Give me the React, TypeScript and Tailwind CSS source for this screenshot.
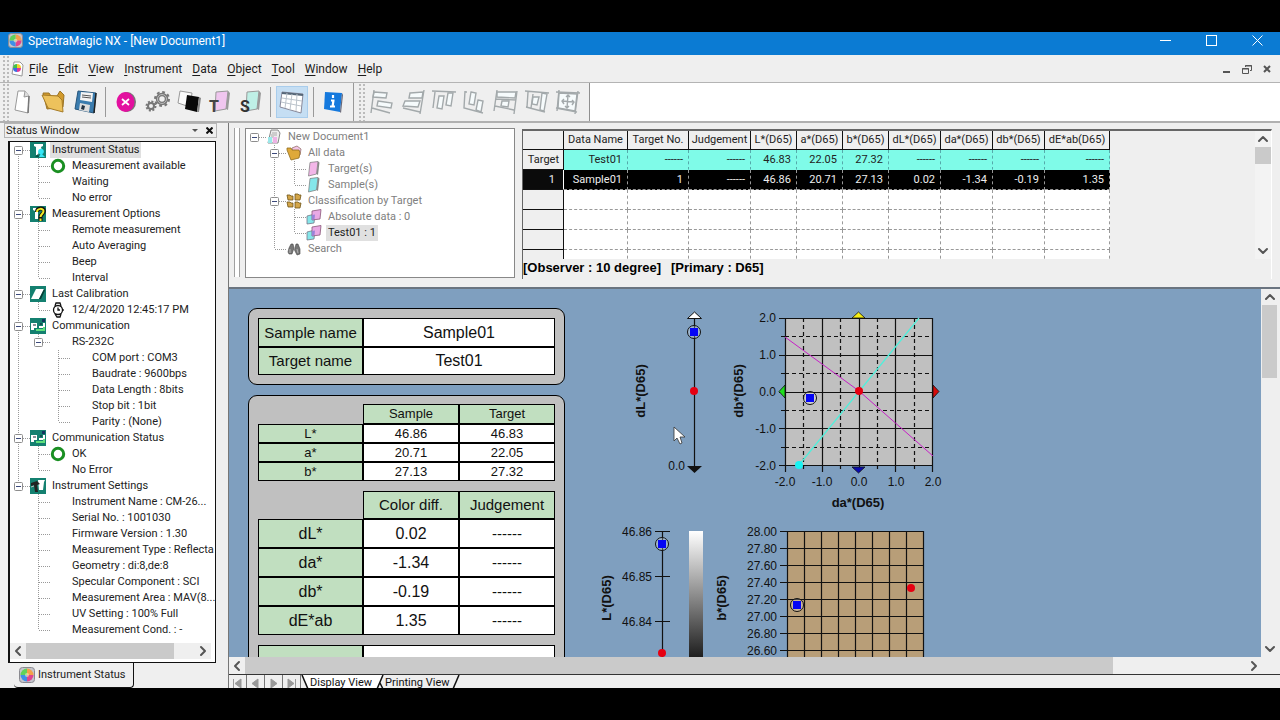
import type { ReactNode } from 'react'
import { ChevronDown, ChevronLeft, ChevronRight, ChevronUp } from 'lucide-react'

type TreeIcon =
  | 'status'
  | 'options'
  | 'calibration'
  | 'comm'
  | 'settings'
  | 'ring'
  | 'watch'
  | 'document'
  | 'folder'
  | 'target'
  | 'sample'
  | 'folders'
  | 'pair'
  | 'search'

interface TreeRow {
  guides: string
  label: string
  icon?: TreeIcon
  selected?: boolean
}

// One guide letter per 20px column:
// i = pass through, t = branch, l = last branch, . = empty
// F / M / L / R = toggle box that is first, middle, last or alone
const statusRows: TreeRow[] = [
  { guides: 'F', label: 'Instrument Status', icon: 'status', selected: true },
  { guides: 'it', label: 'Measurement available', icon: 'ring' },
  { guides: 'it', label: 'Waiting' },
  { guides: 'il', label: 'No error' },
  { guides: 'M', label: 'Measurement Options', icon: 'options' },
  { guides: 'it', label: 'Remote measurement' },
  { guides: 'it', label: 'Auto Averaging' },
  { guides: 'it', label: 'Beep' },
  { guides: 'il', label: 'Interval' },
  { guides: 'M', label: 'Last Calibration', icon: 'calibration' },
  { guides: 'il', label: '12/4/2020 12:45:17 PM', icon: 'watch' },
  { guides: 'M', label: 'Communication', icon: 'comm' },
  { guides: 'iL', label: 'RS-232C' },
  { guides: 'i.t', label: 'COM port : COM3' },
  { guides: 'i.t', label: 'Baudrate : 9600bps' },
  { guides: 'i.t', label: 'Data Length : 8bits' },
  { guides: 'i.t', label: 'Stop bit : 1bit' },
  { guides: 'i.l', label: 'Parity : (None)' },
  { guides: 'M', label: 'Communication Status', icon: 'comm' },
  { guides: 'it', label: 'OK', icon: 'ring' },
  { guides: 'il', label: 'No Error' },
  { guides: 'L', label: 'Instrument Settings', icon: 'settings' },
  { guides: '.t', label: 'Instrument Name : CM-26...' },
  { guides: '.t', label: 'Serial No. : 1001030' },
  { guides: '.t', label: 'Firmware Version : 1.30' },
  { guides: '.t', label: 'Measurement Type : Reflecta' },
  { guides: '.t', label: 'Geometry : di:8,de:8' },
  { guides: '.t', label: 'Specular Component : SCI' },
  { guides: '.t', label: 'Measurement Area : MAV(8...' },
  { guides: '.t', label: 'UV Setting : 100% Full' },
  { guides: '.l', label: 'Measurement Cond. : -' },
]

const documentRows: TreeRow[] = [
  { guides: 'R', label: 'New Document1', icon: 'document' },
  { guides: '.M', label: 'All data', icon: 'folder' },
  { guides: '.it', label: 'Target(s)', icon: 'target' },
  { guides: '.il', label: 'Sample(s)', icon: 'sample' },
  { guides: '.M', label: 'Classification by Target', icon: 'folders' },
  { guides: '.it', label: 'Absolute data : 0', icon: 'pair' },
  { guides: '.il', label: 'Test01 : 1', icon: 'pair', selected: true },
  { guides: '.l', label: 'Search', icon: 'search' },
]

const menus = ['File', 'Edit', 'View', 'Instrument', 'Data', 'Object', 'Tool', 'Window', 'Help']

const columns = [
  { label: 'Data Name', width: 'w-16' },
  { label: 'Target No.', width: 'w-[61px]' },
  { label: 'Judgement', width: 'w-[62px]' },
  { label: 'L*(D65)', width: 'w-[46px]' },
  { label: 'a*(D65)', width: 'w-[46px]' },
  { label: 'b*(D65)', width: 'w-[46px]' },
  { label: 'dL*(D65)', width: 'w-[52px]' },
  { label: 'da*(D65)', width: 'w-[52px]' },
  { label: 'db*(D65)', width: 'w-[52px]' },
  { label: 'dE*ab(D65)', width: 'w-[65px]' },
]

const none = '------'
const targetRow = ['Test01', none, none, '46.83', '22.05', '27.32', none, none, none, none]
const sampleRow = ['Sample01', '1', none, '46.86', '20.71', '27.13', '0.02', '-1.34', '-0.19', '1.35']

function Guide({ kind }: { kind: string }) {
  const box = 'FMLR'.includes(kind)
  const up = 'itlML'.includes(kind)
  const down = 'itFM'.includes(kind)
  const right = kind !== 'i' && kind !== '.'

  return (
    <svg width="20" height="16" className="shrink-0" stroke="#999" strokeDasharray="1 1" fill="none" aria-hidden="true">
      {up ? <path d="M8.5 0V8" /> : null}
      {down ? <path d="M8.5 8V16" /> : null}
      {right ? <path d="M9 8.5H20" /> : null}
      {box ? (
        <g strokeDasharray="none">
          <rect x="4.5" y="4.5" width="8" height="8" rx="1" fill="#fff" stroke="#8d8d8d" />
          <path d="M6 8.5H11" stroke="#3c4a7c" />
        </g>
      ) : null}
    </svg>
  )
}

function Sheet({ fill }: { fill: string }) {
  return (
    <g>
      <path d="M4 1.5L12 .5L10.500 13L2.500 15Z" fill={fill} stroke="#777" strokeWidth=".7" />
      <path d="M12 .5L13.500 1.500L12 14L10.500 13Z" fill="#888" />
    </g>
  )
}

function TreeGlyph({ icon }: { icon: TreeIcon }) {
  const teal = <rect width="16" height="16" fill="#148070" />

  return (
    <svg width="16" height="16" viewBox="0 0 16 16" className="shrink-0" aria-hidden="true">
      {icon === 'status' && (
        <>
          {teal}
          <path d="M4 2H13V4L11 5L12 9H9L8 13H6V5L4 4Z" fill="#fff" />
          <circle cx="11" cy="9.500" r="2.800" fill="#35e5f5" />
          <path d="M11 11L15 15H9Z" fill="#35e5f5" />
          <path d="M8 12L5 15H9Z" fill="#0a4f46" />
        </>
      )}
      {icon === 'options' && (
        <>
          {teal}
          <path d="M3 2H9L8 5V13H5V5L3 4Z" fill="#fff" />
          <path d="M7 6C7 1.500 14 1.500 14 5C14 8 10.500 8 10.500 11V15" stroke="#111" strokeWidth="4" fill="none" />
          <path d="M7 6C7 2 13.500 2 13.500 5C13.500 8 10.500 8 10.500 11M10.500 12.500V15" stroke="#f2ea25" strokeWidth="2" fill="none" />
        </>
      )}
      {icon === 'calibration' && (
        <>
          {teal}
          <path d="M6 3H14L9 13H1Z" fill="#fff" />
          <path d="M14 3L9 13H11L15 4.500Z" fill="#063d35" />
        </>
      )}
      {icon === 'comm' && (
        <>
          {teal}
          <path d="M1 5H7V10H4V12H1Z" fill="#fff" />
          <path d="M9 9H14V5" stroke="#fff" strokeWidth="2" fill="none" />
          <path d="M3 7H6M10 6H12" stroke="#123" />
          <path d="M6 12H14V9" stroke="#5fe07d" strokeWidth="2" fill="none" />
          <path d="M12 1H15V4H12Z" fill="#12355e" />
        </>
      )}
      {icon === 'settings' && (
        <>
          {teal}
          <path d="M8 2H15L14 4L13 12H9Z" fill="#fff" />
          <path d="M1 5L7 3L10 6L7 7L8 14H5L4 7L1 8Z" fill="#222" />
          <path d="M1 9L4 8" stroke="#bbb" />
        </>
      )}
      {icon === 'ring' && <circle cx="8" cy="8" r="5.700" fill="none" stroke="#1a8f22" strokeWidth="3" />}
      {icon === 'watch' && (
        <g fill="#fff" stroke="#111" strokeWidth="1.300">
          <path d="M5 4L6 1H10L11 4M5 12L7 15H10L11 12" />
          <circle cx="8" cy="8" r="4.500" />
          <path d="M8 5.500V8H10M13 7V9" />
        </g>
      )}
      {icon === 'document' && (
        <>
          <path d="M5 1H12L14 4L12 14H2Z" fill="#eee" stroke="#888" />
          <path d="M6 4H11M5 6H11M5 8H8" stroke="#aaa" />
          <path d="M2 8H6V14H2Z" fill="#9be8ea" />
          <path d="M7 8H11V14H7Z" fill="#eeb3e6" />
        </>
      )}
      {icon === 'folder' && (
        <>
          <path d="M6 3L11 1L15 4L14 10H7Z" fill="#f3c4e6" stroke="#a88" />
          <path d="M1 3H5L6 5H13L14 8L13 13L5 15L1 5Z" fill="#dfa93a" stroke="#8f6c20" strokeWidth=".8" />
        </>
      )}
      {icon === 'target' && <Sheet fill="#f3b6e8" />}
      {icon === 'sample' && <Sheet fill="#85e6ea" />}
      {icon === 'folders' && (
        <g fill="#d3a548" stroke="#6f5417" strokeWidth=".8">
          <path d="M1 2H4L5 3H7V7H2Z" />
          <path d="M9 1H12L13 2H15L14 7H9Z" />
          <path d="M1 9H4L5 10H7V14H2Z" />
          <path d="M9 9H12L13 10H15L14 15H9Z" />
        </g>
      )}
      {icon === 'pair' && (
        <>
          <path d="M1 7L9 5L8 14L1 15Z" fill="#85e6ea" stroke="#778" strokeWidth=".8" />
          <path d="M6 2L15 .5L14 10L6 11Z" fill="#e9a9e4" stroke="#857" strokeWidth=".8" />
          <path d="M6 6L9 5.500L8.500 10L6 11Z" fill="#9a82d8" />
        </>
      )}
      {icon === 'search' && (
        <g fill="#777" stroke="#444" strokeWidth=".6">
          <path d="M3 7L5 3H7L8 7L6 13H3L2 11Z" />
          <path d="M9 7L10 3H12L14 8V13L11 14L8.500 9Z" />
          <path d="M4 8L4 12M11 8L12 12" stroke="#ddd" />
        </g>
      )}
    </svg>
  )
}

function Tree({ rows, muted = false }: { rows: TreeRow[]; muted?: boolean }) {
  return (
    <ul className="overflow-hidden text-[11px] leading-4">
      {rows.map((row) => (
        <li key={row.guides + row.label} className="flex h-4 items-center whitespace-nowrap">
          {row.guides.split('').map((kind, index) => (
            <Guide key={index} kind={kind} />
          ))}
          <span className="flex w-5 shrink-0">{row.icon ? <TreeGlyph icon={row.icon} /> : null}</span>
          <span className={`pl-0.5 ${row.selected ? 'bg-[#e0e0e0] pr-0.5' : ''} ${muted && !row.selected ? 'text-[#808080]' : 'text-[#222]'}`}>
            {row.label}
          </span>
        </li>
      ))}
    </ul>
  )
}

function ColorOrb({ size = 16 }: { size?: number }) {
  return (
    <svg width={size} height={size} viewBox="0 0 16 16" aria-hidden="true">
      <rect x=".5" y=".5" width="15" height="15" rx="3" fill="#c4c4cc" stroke="#8a8a90" />
      <path d="M8 8V1.500A6.500 6.500 0 0 1 14.500 8Z" fill="#f3a04a" />
      <path d="M8 8H14.500A6.500 6.500 0 0 1 8 14.500Z" fill="#e0458e" />
      <path d="M8 8V14.500A6.500 6.500 0 0 1 1.500 8Z" fill="#3e8fe8" />
      <path d="M8 8H1.500A6.500 6.500 0 0 1 8 1.500Z" fill="#5fd35a" />
      <circle cx="8" cy="8" r="2" fill="#f4f0c0" opacity=".6" />
    </svg>
  )
}

function Grip() {
  return <span className="h-full w-2 shrink-0 bg-[radial-gradient(#bbb_1px,transparent_1px)] bg-[size:4px_4px]" />
}

function TitleBar() {
  return (
    <header className="flex h-[23px] shrink-0 items-center bg-[#0b7bd3] pb-1.5 pl-2 text-white">
      <ColorOrb size={15} />
      <h1 className="ml-[5px] text-xs leading-4">SpectraMagic NX - [New Document1]</h1>
      <div className="ml-auto flex">
        <button type="button" aria-label="Minimize" className="flex h-4 w-[46px] items-center justify-center">
          <svg width="11" height="11" stroke="#fff"><path d="M0 5.500H11" /></svg>
        </button>
        <button type="button" aria-label="Maximize" className="flex h-4 w-[46px] items-center justify-center">
          <svg width="11" height="11" stroke="#fff" fill="none"><rect x=".5" y=".5" width="10" height="10" /></svg>
        </button>
        <button type="button" aria-label="Close" className="flex h-4 w-[46px] items-center justify-center">
          <svg width="11" height="11" stroke="#fff"><path d="M.5 .5L10.500 10.500M10.500 .5L.5 10.500" /></svg>
        </button>
      </div>
    </header>
  )
}

function MenuBar() {
  return (
    <nav className="flex h-7 shrink-0 items-center border-b border-[#b4b4b4] bg-[#efefef] pl-0.5 text-xs text-[#1c1c1c]">
      <Grip />
      <svg width="13" height="16" viewBox="0 0 13 16" className="mr-[5px] ml-px" aria-hidden="true">
        <path d="M3 1H9L12 4L11 15L1 13Z" fill="#fff" stroke="#999" />
        <path d="M6 7V3A4 4 0 0 1 10 7Z" fill="#f5d02c" />
        <path d="M6 7H10A4 4 0 0 1 6 11Z" fill="#e0379a" />
        <path d="M6 7V11A4 4 0 0 1 2 7Z" fill="#3d6fe0" />
        <path d="M6 7H2A4 4 0 0 1 6 3Z" fill="#45c04a" />
      </svg>
      <ul className="flex gap-2.5">
        {menus.map((menu) => (
          <li key={menu}>
            <button type="button">
              <span className="underline underline-offset-2">{menu[0]}</span>
              {menu.slice(1)}
            </button>
          </li>
        ))}
      </ul>
      <div className="mr-[3px] ml-auto flex">
        <button type="button" aria-label="Minimize document" className="flex w-5 justify-center">
          <svg width="10" height="10" stroke="#555" strokeWidth="2"><path d="M1 8H8" /></svg>
        </button>
        <button type="button" aria-label="Restore document" className="flex w-5 justify-center">
          <svg width="10" height="10" stroke="#555" fill="none">
            <path d="M3.500 3V1.500H9.500V6.500H8M3 2H10" />
            <path d="M.5 4.500H6.500V9.500H.5ZM0 5H7" />
          </svg>
        </button>
        <button type="button" aria-label="Close document" className="flex w-5 justify-center">
          <svg width="8" height="10" stroke="#555" strokeWidth="2"><path d="M1 2L7 8M7 2L1 8" /></svg>
        </button>
      </div>
    </nav>
  )
}

function ToolButton({ label, width = 'w-8', active = false, children }: { label: string; width?: string; active?: boolean; children: ReactNode }) {
  return (
    <button
      type="button"
      aria-label={label}
      className={`flex h-8 shrink-0 items-center justify-center ${width} ${active ? 'border border-[#a9cdec] bg-[#c5def3]' : ''}`}
    >
      <svg width="26" height="26" viewBox="0 0 26 26" fill="none" className="shrink-0 overflow-visible">
        {children}
      </svg>
    </button>
  )
}

function ToolSeparator() {
  return <span className="mx-[5px] h-[30px] w-px shrink-0 bg-[#999]" />
}

const alignTools = [
  { label: 'Align left', frame: 'M5 1L2 24M3 19L21 24', boxes: 'M5 3L18 4L17 9L4 8ZM9 12L23 14L22 19L8 17Z' },
  { label: 'Align right', frame: 'M24 1L20 25M3 19L20 23', boxes: 'M10 4L23 3L22 9L9 9ZM5 12L20 12L18 18L3 17Z' },
  { label: 'Align top', frame: 'M1 2L25 3M4 3L2 19', boxes: 'M8 7L13 7L11 20L6 19ZM17 4H22L20 17L15 16Z' },
  { label: 'Align bottom', frame: 'M3 2L2 19L21 24M3 3H5', boxes: 'M9 3L14 4L12 16L7 15ZM16 11L21 12L19 23L14 21Z' },
  { label: 'Same width', frame: 'M4 1L1 22M24 2L21 25M3 10L23 11M2 17L21 21', boxes: 'M4 3L23 3L22 9L4 8ZM9 12L16 12L15 18L8 17Z' },
  { label: 'Same height', frame: 'M1 2L25 4M4 3L3 18M2 18L21 23M9 5L7 19', boxes: 'M18 4L23 5L20 22L16 21ZM9 8H15L13 16L8 15Z' },
  { label: 'Same size', frame: 'M1 3L25 4M4 1L2 22M23 2L20 25M1 19L22 23', boxes: 'M4 4L22 5L20 22L3 19Z' },
]

function Toolbar() {
  return (
    <div className="flex h-10 shrink-0 border-b-2 border-[#b0b0b0] bg-white">
      <div className="flex items-center border-r border-[#8f8f8f] bg-[#efefef] pr-1.5 pl-0.5">
        <Grip />
        <ToolButton label="New" width="w-[26px]">
          <path d="M8 2H15L19 7L18 24L5 21Z" fill="#fff" stroke="#999" />
          <path d="M15 2L14 8L19 7" fill="#ddd" stroke="#999" />
          <path d="M19 7L18 24" stroke="#777" strokeWidth="1.500" />
        </ToolButton>
        <ToolButton label="Open" width="w-9">
          <path d="M2 4H8L10 7H16L19 2L23 6L22 18L6 20Z" fill="#d29a2c" stroke="#9a7426" />
          <path d="M1 6L17 7L21 11L22 23L7 19Z" fill="#edc25c" stroke="#a67c28" />
        </ToolButton>
        <ToolButton label="Save" width="w-7">
          <path d="M5 2L23 4L21 24L2 20Z" fill="#3b7cae" stroke="#27567c" />
          <path d="M8 3L20 4L19 13L7 11Z" fill="#f4f4f4" />
          <path d="M9 6L18 7M9 8L18 9" stroke="#555" />
          <path d="M7 14L17 16L16 23L6 21Z" fill="#ddd" />
          <path d="M9 16L12 17L11 21L8 20Z" fill="#234" />
          <path d="M23 4L21 24" stroke="#222" strokeWidth="1.500" />
        </ToolButton>
        <ToolSeparator />
        <ToolButton label="Disconnect" width="w-[30px]">
          <ellipse cx="14" cy="13" rx="9" ry="10" fill="#777" />
          <ellipse cx="12.500" cy="13" rx="9" ry="10" fill="#e3109f" />
          <path d="M9 10L16 16M16 10L9 16" stroke="#fff" strokeWidth="1.800" />
        </ToolButton>
        <ToolButton label="Settings">
          <circle cx="18" cy="10" r="4.500" stroke="#777" strokeWidth="3.500" />
          <circle cx="18" cy="10" r="7" stroke="#777" strokeWidth="2" strokeDasharray="2.800 2.700" />
          <circle cx="18" cy="10" r="4.500" stroke="#bbb" />
          <circle cx="7" cy="17" r="3" stroke="#777" strokeWidth="2" />
          <circle cx="7" cy="17" r="4.500" stroke="#777" strokeWidth="2" strokeDasharray="2 1.500" />
        </ToolButton>
        <ToolButton label="Calibrate">
          <path d="M4 2L16 4L14 18L2 14Z" fill="#fafafa" stroke="#999" />
          <path d="M11 6L23 8L21 23L9 20Z" fill="#090909" />
          <path d="M23 8L25 9L23 23L21 23Z" fill="#888" />
        </ToolButton>
        <ToolButton label="Measure target" width="w-[30px]">
          <path d="M9 3L21 2L19 20L8 22Z" fill="#f0c6ef" stroke="#999" />
          <path d="M21 2L23 4L21 21L19 20Z" fill="#999" />
          <text x="2" y="23" fill="#444" className="text-base font-bold">T</text>
        </ToolButton>
        <ToolButton label="Measure sample" width="w-[30px]">
          <path d="M10 3L22 2L20 20L9 22Z" fill="#bff0e6" stroke="#999" />
          <path d="M22 2L24 4L22 21L20 20Z" fill="#999" />
          <text x="3" y="23" fill="#333" className="text-base font-bold">S</text>
        </ToolButton>
        <ToolSeparator />
        <ToolButton label="List window" active>
          <path d="M3 3L24 5L22 24L1 18Z" fill="#fff" stroke="#889" />
          <path d="M3 4L24 6" stroke="#567" strokeWidth="2" />
          <path d="M3 9L23 12M2 13L22 17M8 4L6 19M13 5L11 21M18 5L17 22" stroke="#bcc4cc" />
        </ToolButton>
        <ToolSeparator />
        <ToolButton label="Information" width="w-[27px]">
          <path d="M5 3L22 4L20 23L4 20Z" fill="#1579dd" />
          <path d="M22 4L23 6L21 24L20 23Z" fill="#667" />
          <path d="M13 6V9M11 11.500H14.500M13.500 11L12.500 18M10 17.500H15" stroke="#fff" strokeWidth="2.200" />
        </ToolButton>
        <span className="mr-1 ml-[7px] h-full w-px bg-[#999]" />
        <Grip />
        {alignTools.map((tool) => (
          <ToolButton key={tool.label} label={tool.label} width="w-[31px]">
            <g stroke="#a3a9ab" strokeWidth="1.400">
              <path d={tool.boxes} fill="#f6fbfc" />
              <path d={tool.frame} />
              {tool.label === 'Same size' ? (
                <path d="M13 6L12 19M7 12L19 13M11 8L13 6L15 8M10 17L12 19L14 17M9 10L7 12L9 15M17 11L19 13L17 16" />
              ) : null}
            </g>
          </ToolButton>
        ))}
      </div>
    </div>
  )
}

function StatusPane() {
  return (
    <aside className="flex w-[217px] shrink-0 flex-col bg-[#efefef]">
      <div className="ml-1 flex h-[15px] shrink-0 items-center border border-[#b5b5b5] pl-px">
        <h2 className="text-[11px] leading-3 text-[#222]">Status Window</h2>
        <button type="button" aria-label="Pane menu" className="mr-2 ml-auto">
          <svg width="6" height="4"><path d="M0 0H6L3 3Z" fill="#555" /></svg>
        </button>
        <button type="button" aria-label="Close pane" className="mr-[3px]">
          <svg width="7" height="7" stroke="#111" strokeWidth="2"><path d="M.5 .5L6.500 6.500M6.500 .5L.5 6.500" /></svg>
        </button>
      </div>
      <div className="mt-[3px] mr-px ml-2 flex min-h-0 flex-1 flex-col border border-l-2 border-[#111] bg-white pb-[3px]">
        <div className="min-h-0 flex-1 overflow-hidden">
          <Tree rows={statusRows} />
        </div>
        <div className="mr-1 flex h-4 shrink-0 items-center bg-[#efefef] text-[#555]">
          <button type="button" aria-label="Scroll left"><ChevronLeft className="size-4" strokeWidth={3} /></button>
          <span className="h-full w-[148px] bg-[#cacaca]" />
          <button type="button" aria-label="Scroll right" className="ml-auto"><ChevronRight className="size-4" strokeWidth={3} /></button>
        </div>
      </div>
      <div className="flex h-[25px] shrink-0">
        <button type="button" className="ml-3.5 flex items-center gap-[3px] rounded-b-sm border-r border-b border-[#111] pr-2 pl-[5px] text-[11px] text-[#222]">
          <ColorOrb />
          Instrument Status
        </button>
      </div>
    </aside>
  )
}

function DataGrid() {
  return (
    <div className="mt-px flex min-w-0 flex-1 flex-col border-t-2 border-r border-l border-[#666] border-r-white">
      <div className="flex h-32 shrink-0">
        <div className="min-w-0 overflow-hidden">
          <table className="table-fixed border-separate border-spacing-0 text-right text-[11px] leading-[18px] whitespace-nowrap text-[#222]">
            <thead>
              <tr className="h-[19px] text-center">
                <td className="w-[41px] border-r border-b border-[#111] bg-[#efefef]" />
                {columns.map((column) => (
                  <th key={column.label} scope="col" className={`border-r border-b border-[#111] bg-[#efefef] p-0 font-normal ${column.width}`}>
                    {column.label}
                  </th>
                ))}
              </tr>
            </thead>
            <tbody>
              <tr className="h-5">
                <th scope="row" className="border-r border-b border-[#111] bg-[#efefef] p-0 px-1 text-right font-normal">Target</th>
                {targetRow.map((value, index) => (
                  <td key={index} className="border-r border-b border-dashed border-[#5aa] border-b-[#7ffbe8] bg-[#7ffbe8] p-0 pr-[5px]">{value}</td>
                ))}
              </tr>
              <tr className="h-5 text-[#eee]">
                <th scope="row" className="border-r border-b border-[#111] border-r-white bg-[#0b0b0b] p-0 pr-2 text-right font-normal">1</th>
                {sampleRow.map((value, index) => (
                  <td key={index} className="border-r border-b border-dashed border-[#999] bg-black p-0 pr-[5px]">{value}</td>
                ))}
              </tr>
              {[0, 1, 2, 3].map((row) => (
                <tr key={row} className="h-5">
                  <th className="border-r border-b border-[#111] bg-[#efefef]" />
                  {columns.map((column) => (
                    <td key={column.label} className="border-r border-b border-dashed border-[#999] bg-white" />
                  ))}
                </tr>
              ))}
            </tbody>
          </table>
        </div>
        <div className="ml-auto flex w-4 shrink-0 flex-col items-center bg-[#f3f3f3] text-[#555]">
          <button type="button" aria-label="Scroll up"><ChevronUp className="size-4" strokeWidth={3} /></button>
          <span className="h-[17px] w-full bg-[#cacaca]" />
          <button type="button" aria-label="Scroll down" className="mt-auto"><ChevronDown className="size-4" strokeWidth={3} /></button>
        </div>
      </div>
      <p className="flex gap-2.5 font-['Liberation_Sans',Arial,sans-serif] text-[13px] leading-[18px] font-bold text-black">
        <span>[Observer : 10 degree]</span>
        <span>[Primary : D65]</span>
      </p>
    </div>
  )
}

const cell = 'border border-black p-0 text-center font-normal'
const head = 'border border-black bg-[#c1dfc0] p-0 text-center font-normal'

function NameCard() {
  return (
    <section className="rounded-[9px] border border-black bg-[#c0c0c0] p-[9px]">
      <table className="w-full table-fixed border-separate border-spacing-0 text-base leading-6">
        <tbody>
          <tr className="h-[29px]">
            <th scope="row" className={`${head} w-[105px] text-[15px]`}>Sample name</th>
            <td className={`${cell} bg-white`}>Sample01</td>
          </tr>
          <tr className="h-7">
            <th scope="row" className={`${head} text-[15px]`}>Target name</th>
            <td className={`${cell} bg-white`}>Test01</td>
          </tr>
        </tbody>
      </table>
    </section>
  )
}

function ResultCard() {
  const values = [
    ['L*', '46.86', '46.83'],
    ['a*', '20.71', '22.05'],
    ['b*', '27.13', '27.32'],
  ]
  const diffs = [
    ['dL*', '0.02'],
    ['da*', '-1.34'],
    ['db*', '-0.19'],
    ['dE*ab', '1.35'],
  ]

  return (
    <section className="flex flex-col gap-2.5 rounded-[9px] border border-black bg-[#c0c0c0] px-[9px] py-2">
      <table className="w-full table-fixed border-separate border-spacing-0 text-[13px] leading-4">
        <thead>
          <tr className="h-5">
            <td className="w-[105px]" />
            <th scope="col" className={head}>Sample</th>
            <th scope="col" className={head}>Target</th>
          </tr>
        </thead>
        <tbody>
          {values.map(([name, sample, target]) => (
            <tr key={name} className="h-[19px]">
              <th scope="row" className={head}>{name}</th>
              <td className={`${cell} bg-white`}>{sample}</td>
              <td className={`${cell} bg-white`}>{target}</td>
            </tr>
          ))}
        </tbody>
      </table>
      <table className="w-full table-fixed border-separate border-spacing-0 text-base leading-6">
        <thead>
          <tr className="h-7 text-[15px]">
            <td className="w-[105px]" />
            <th scope="col" className={head}>Color diff.</th>
            <th scope="col" className={head}>Judgement</th>
          </tr>
        </thead>
        <tbody>
          {diffs.map(([name, value]) => (
            <tr key={name} className="h-[29px]">
              <th scope="row" className={head}>{name}</th>
              <td className={`${cell} bg-white`}>{value}</td>
              <td className={`${cell} bg-white text-[15px]`}>{none}</td>
            </tr>
          ))}
        </tbody>
      </table>
      <table className="w-full table-fixed border-separate border-spacing-0">
        <tbody>
          <tr className="h-[29px]">
            <th className={`${head} w-[105px]`} />
            <td className={`${cell} bg-white`} />
          </tr>
        </tbody>
      </table>
    </section>
  )
}

function SampleMark({ x, y }: { x: number; y: number }) {
  return (
    <g>
      <circle cx={x} cy={y} r="6.500" fill="#fff" fillOpacity=".25" stroke="#111" />
      <rect x={x - 4} y={y - 4} width="8" height="8" fill="#0505f5" />
    </g>
  )
}

function AxisTitle({ x, y, children }: { x: number; y: number; children: string }) {
  return (
    <text x={x} y={y} transform={`rotate(-90 ${x} ${y})`} textAnchor="middle" dominantBaseline="central" className="text-[13px] font-bold">
      {children}
    </text>
  )
}

function LightnessDiffGauge() {
  return (
    <svg width="80" height="211" fill="#111" className="text-xs">
      <AxisTitle x={10} y={82}>dL*(D65)</AxisTitle>
      <path d="M64.500 8V158" stroke="#111" strokeWidth="1.200" />
      <path d="M57.500 9.500L64.500 3L71.500 9.500Z" fill="#fff" stroke="#111" />
      <path d="M57 157H72L64.500 164Z" />
      <text x="55" y="161" textAnchor="end">0.0</text>
      <SampleMark x={64} y={23} />
      <circle cx="64" cy="82" r="4" fill="#e60012" />
    </svg>
  )
}

function ColorDiffPlot() {
  const minor = [0.5, 1.5, 2.5, 3.5]
  const major = [0, 1, 2, 3, 4]

  return (
    <svg width="215" height="211" fill="#111" className="text-xs">
      <AxisTitle x={8} y={82}>db*(D65)</AxisTitle>
      <rect x="55" y="9" width="148" height="148" fill="#c0c0c0" />
      <g stroke="#111" strokeWidth="1.200">
        {minor.map((step) => {
          const at = Math.round(step * 36.75) + 0.5
          return (
            <g key={step}>
              <path d={`M${55 + at} 9V157M55 ${9 + at}H203`} strokeDasharray="4 3" />
              <path d={`M${55 + at} 157V160M51 ${9 + at}H55`} />
            </g>
          )
        })}
        {major.map((step) => {
          const at = Math.round(step * 36.75) + 0.5
          return <path key={step} d={`M${55 + at} 9V163M49 ${9 + at}H203`} />
        })}
      </g>
      <path d="M55 28L129 82L203 147" fill="none" stroke="#c71fc7" />
      <path d="M69 156L189 9" stroke="#4ff0dc" strokeWidth="1.200" />
      <g stroke="#111" strokeWidth=".8">
        <path d="M122 9L128.500 3L135 9Z" fill="#f6ee15" />
        <path d="M122 158H135L128.500 164Z" fill="#0a0ab0" />
        <path d="M55 76V89L49 82.500Z" fill="#1ee01e" />
        <path d="M203 76V89L209 82.500Z" fill="#d50a0a" />
      </g>
      <circle cx="69" cy="156" r="4" fill="#19f3f3" />
      <SampleMark x={80} y={89} />
      <circle cx="129" cy="82" r="4" fill="#e60012" />
      {['2.0', '1.0', '0.0', '-1.0', '-2.0'].map((label, index) => (
        <text key={label} x="46" y={13 + index * 37} textAnchor="end">{label}</text>
      ))}
      {['-2.0', '-1.0', '0.0', '1.0', '2.0'].map((label, index) => (
        <text key={label} x={55 + index * 37} y="177" textAnchor="middle">{label}</text>
      ))}
      <text x="128" y="198" textAnchor="middle" className="text-[13px] font-bold">da*(D65)</text>
    </svg>
  )
}

function LightnessGauge() {
  return (
    <svg width="115" height="160" fill="#111" className="text-xs">
      <defs>
        <linearGradient id="lightness" x1="0" y1="0" x2="0" y2="1">
          <stop offset="0" stopColor="#fff" />
          <stop offset="1" stopColor="#000" />
        </linearGradient>
      </defs>
      <AxisTitle x={9} y={78}>L*(D65)</AxisTitle>
      <path d="M65.500 11V160M58 11.500H73M58 56.500H73M58 101.500H73" stroke="#111" strokeWidth="1.200" />
      {['46.86', '46.85', '46.84'].map((label, index) => (
        <text key={label} x="55" y={16 + index * 45} textAnchor="end">{label}</text>
      ))}
      <SampleMark x={65} y={24} />
      <circle cx="65" cy="133" r="4" fill="#e60012" />
      <rect x="92" y="11" width="14" height="143" fill="url(#lightness)" />
    </svg>
  )
}

function ChromaPlot() {
  const labels = ['28.00', '27.80', '27.60', '27.40', '27.20', '27.00', '26.80', '26.60']

  return (
    <svg width="215" height="160" fill="#111" className="text-xs">
      <AxisTitle x={9} y={78}>b*(D65)</AxisTitle>
      <rect x="75" y="11" width="137" height="149" fill="#b89e78" />
      <g stroke="#111" strokeWidth="1.200">
        {[0, 1, 2, 3, 4, 5, 6, 7, 8].map((step) => (
          <path key={step} d={`M${75.5 + step * 17} 11V160`} />
        ))}
        {labels.map((label, index) => (
          <path key={label} d={`M68 ${11.5 + index * 17}H212`} />
        ))}
      </g>
      {labels.map((label, index) => (
        <text key={label} x="65" y={16 + index * 17} textAnchor="end">{label}</text>
      ))}
      <SampleMark x={85} y={85} />
      <circle cx="199" cy="68" r="4" fill="#e60012" />
    </svg>
  )
}

function ReportCanvas() {
  return (
    <div className="relative flex min-w-0 flex-1 gap-8 overflow-hidden bg-[#7f9fbf] pt-[19px] pl-[19px] font-['Liberation_Sans',Arial,sans-serif]">
      <div className="flex w-[317px] shrink-0 flex-col gap-2.5 text-[#111]">
        <NameCard />
        <ResultCard />
      </div>
      <div className="flex flex-col pt-px">
        <div className="flex gap-5 pl-[33px]">
          <LightnessDiffGauge />
          <ColorDiffPlot />
        </div>
        <div className="flex">
          <LightnessGauge />
          <ChromaPlot />
        </div>
      </div>
      <svg width="13" height="20" className="absolute top-[137px] left-[444px]" aria-hidden="true">
        <path d="M1 1V15L4 12L7 18L9 17L7 11H12Z" fill="#fff" stroke="#333" strokeWidth=".8" />
      </svg>
    </div>
  )
}

function SheetTabs() {
  const steps = [
    { label: 'First sheet', path: 'M4.500 3V12M12 3L6 7.500L12 12Z' },
    { label: 'Previous sheet', path: 'M11 3L5 7.500L11 12Z' },
    { label: 'Next sheet', path: 'M6 3L12 7.500L6 12Z' },
    { label: 'Last sheet', path: 'M12.500 3V12M5 3L11 7.500L5 12Z' },
  ]

  return (
    <div className="flex h-3.5 shrink-0 overflow-hidden border-t border-[#333] bg-[#efefef] text-[11px] leading-4 text-[#111]">
      {steps.map((step) => (
        <button key={step.label} type="button" aria-label={step.label} className="h-4 w-[18px] border-r border-[#777]">
          <svg width="17" height="15" fill="#999" stroke="#999"><path d={step.path} /></svg>
        </button>
      ))}
      <svg width="9" height="14"><path d="M1 0L8 14H9V0Z" fill="#fff" /><path d="M1 0L7 14" stroke="#111" strokeWidth="1.500" /></svg>
      <button type="button" className="flex bg-white">Display View</button>
      <svg width="13" height="14" fill="none">
        <path d="M0 0H11L5 14H0Z" fill="#fff" />
        <path d="M11 0L5 14M8 8L11 14" stroke="#111" strokeWidth="1.500" />
      </svg>
      <button type="button" className="flex">Printing View</button>
      <svg width="13" height="14"><path d="M9 0L3 14" stroke="#111" strokeWidth="1.500" /></svg>
    </div>
  )
}

export default function App() {
  return (
    <div className="flex h-screen flex-col overflow-hidden bg-black py-8 font-[Roboto,'Liberation_Sans',sans-serif]">
      <TitleBar />
      <MenuBar />
      <Toolbar />
      <main className="flex min-h-0 flex-1 bg-[#efefef]">
        <StatusPane />
        <div className="ml-[11px] flex min-w-0 flex-1 flex-col border-l border-[#777]">
          <section className="flex h-[166px] shrink-0 border-b-2 border-[#6a7480] bg-[#efefef] pt-[5px] pr-2 pb-2 pl-[5px]">
            <span className="h-[149px] w-1.5 shrink-0 border-x border-[#a0a0a0] bg-white" />
            <div className="mr-[7px] ml-[5px] h-[150px] w-[270px] shrink-0 border border-[#888] bg-white">
              <Tree rows={documentRows} muted />
            </div>
            <DataGrid />
          </section>
          <div className="flex min-h-0 flex-1">
            <ReportCanvas />
            <div className="mr-0.5 flex w-[17px] shrink-0 flex-col items-center bg-[#efefef] text-[#555]">
              <button type="button" aria-label="Scroll up"><ChevronUp className="size-4" strokeWidth={3} /></button>
              <span className="h-[73px] w-[15px] bg-[#cacaca]" />
              <button type="button" aria-label="Scroll down" className="mt-auto"><ChevronDown className="size-4" strokeWidth={3} /></button>
            </div>
          </div>
          <div className="mr-[18px] flex h-[17px] shrink-0 items-center bg-[#efefef] text-[#555]">
            <button type="button" aria-label="Scroll left"><ChevronLeft className="size-4" strokeWidth={3} /></button>
            <span className="h-full w-[84%] bg-[#cacaca]" />
            <button type="button" aria-label="Scroll right" className="ml-auto"><ChevronRight className="size-4" strokeWidth={3} /></button>
          </div>
          <SheetTabs />
        </div>
      </main>
    </div>
  )
}
